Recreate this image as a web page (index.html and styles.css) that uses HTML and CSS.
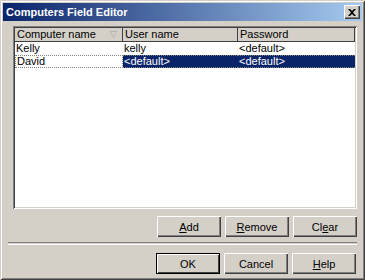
FILE: index.html
```html
<!DOCTYPE html>
<html lang="en">
<head>
    <meta charset="UTF-8">
    <title>Computers Field Editor</title>
    <link rel="stylesheet" href="styles.css">
</head>
<body>

    <div class="window">
        <div class="titlebar">
            <span class="title">Computers Field Editor</span>
            <span class="close-btn">
                <svg width="8" height="7" viewBox="0 0 8 7"><path d="M0 0h2l2 2 2-2h2L5 3.5 8 7H6L4 5 2 7H0l3-3.5z" fill="#000"/></svg>
            </span>
        </div>

        <div class="content">
            <div class="grid">
                <div class="grid-row header">
                    <div class="cell">Computer name <span class="filter">&#9661;</span></div>
                    <div class="cell">User name</div>
                    <div class="cell">Password</div>
                </div>
                <div class="grid-row">
                    <div class="cell">Kelly</div>
                    <div class="cell">kelly</div>
                    <div class="cell">&lt;default&gt;</div>
                </div>
                <div class="grid-row selected">
                    <div class="cell focus">David</div>
                    <div class="cell">&lt;default&gt;</div>
                    <div class="cell">&lt;default&gt;</div>
                </div>
            </div>

            <div class="button-row edit-buttons">
                <button class="btn"><u>A</u>dd</button>
                <button class="btn"><u>R</u>emove</button>
                <button class="btn">Cl<u>e</u>ar</button>
            </div>

            <div class="separator"></div>

            <div class="button-row dialog-buttons">
                <button class="btn default">OK</button>
                <button class="btn">Cancel</button>
                <button class="btn"><u>H</u>elp</button>
            </div>
        </div>
    </div>

</body>
</html>
```

FILE: styles.css
```css
/* Page */
body {
    margin: 0;
    font-family: 'Liberation Sans', Arial, sans-serif;
    font-size: 11px;
    color: #000;
    background: #d4d0c8;
}

/* Dialog Window */
.window {
    width: 365px;
    height: 280px;
    box-sizing: border-box;
    padding: 3px;
    background: #d4d0c8;
    box-shadow: inset 1px 1px 0 #d4d0c8, inset -1px -1px 0 #404040,
                inset 2px 2px 0 #fff, inset -2px -2px 0 #808080;
    display: flex;
    flex-direction: column;
}

/* Title Bar */
.titlebar {
    height: 18px;
    background: linear-gradient(to right, #0a246a, #a6caf0);
    display: flex;
    justify-content: space-between;
    align-items: center;
    padding: 0 2px 0 3px;
}

.title {
    color: #fff;
    font-weight: 700;
    font-size: 11px;
}

.close-btn {
    width: 16px;
    height: 14px;
    box-sizing: border-box;
    background: #d4d0c8;
    box-shadow: inset 1px 1px 0 #fff, inset -1px -1px 0 #404040, inset -2px -2px 0 #808080;
    display: flex;
    justify-content: center;
    align-items: center;
}

/* Content */
.content {
    flex: 1;
    display: flex;
    flex-direction: column;
    padding: 5px 5px 0 10px;
}

/* Grid */
.grid {
    height: 183px;
    box-sizing: border-box;
    background: #fff;
    padding: 2px;
    box-shadow: inset 1px 1px 0 #808080, inset -1px -1px 0 #fff,
                inset 2px 2px 0 #404040, inset -2px -2px 0 #d4d0c8;
}

.grid-row {
    display: grid;
    grid-template-columns: 108px 115px 1fr;
    height: 13px;
    line-height: 13px;
}

.grid-row .cell {
    padding-left: 1px;
    white-space: nowrap;
    overflow: hidden;
}

.grid-row.header {
    height: 13px;
    background: #d4d0c8;
    border-bottom: 1px solid #404040;
}

.header .cell {
    border-right: 1px solid #404040;
    padding-left: 2px;
    position: relative;
}

.filter {
    position: absolute;
    right: 5px;
    top: 0;
    color: #a0a0a0;
    font-size: 9px;
}

.selected .cell {
    background: #0a246a;
    color: #fff;
    border-top: 1px dotted #808080;
    border-bottom: 1px dotted #808080;
    line-height: 11px;
}

.selected .cell.focus {
    background: #fff;
    color: #000;
    border-left: 1px dotted #808080;
    border-right: 1px dotted #808080;
}

/* Buttons */
.button-row {
    display: flex;
    justify-content: flex-end;
    gap: 4px;
}

.edit-buttons {
    margin-top: 7px;
    padding-right: 0;
}

.dialog-buttons {
    margin-right: 1px;
}

.btn {
    width: 64px;
    height: 21px;
    font-family: 'Liberation Sans', Arial, sans-serif;
    font-size: 11px;
    color: #000;
    background: #d4d0c8;
    border: none;
    padding: 0;
    box-shadow: inset 1px 1px 0 #fff, inset -1px -1px 0 #404040, inset -2px -2px 0 #808080;
}

.btn.default {
    box-shadow: inset 0 0 0 1px #000, inset 2px 2px 0 #fff, inset -2px -2px 0 #404040;
}

.separator {
    margin: 5px 0 8px -5px;
    height: 1px;
    border-top: 1px solid #808080;
    border-bottom: 1px solid #fff;
}
```
